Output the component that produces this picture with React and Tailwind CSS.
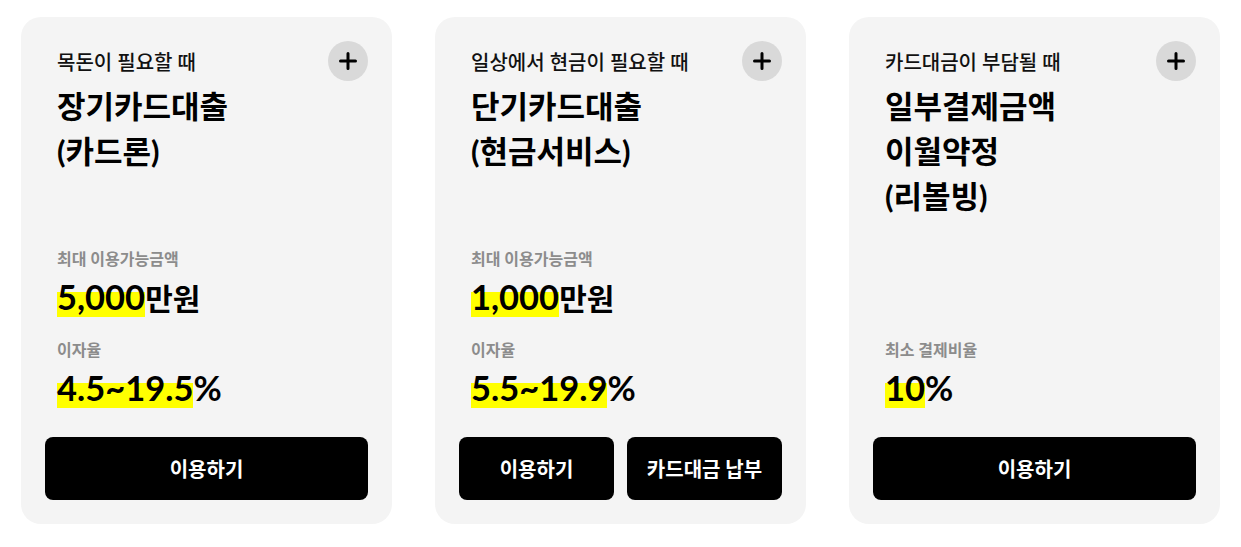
const FONT = "font-['Lato','Noto_Sans_CJK_KR',sans-serif]";

const cards = [
  {
    sub: '목돈이 필요할 때',
    title: ['장기카드대출', '(카드론)'],
    info: [
      { label: '최대 이용가능금액', value: '5,000', unit: '만원' },
      { label: '이자율', value: '4.5~19.5', unit: '%' },
    ],
    buttons: ['이용하기'],
  },
  {
    sub: '일상에서 현금이 필요할 때',
    title: ['단기카드대출', '(현금서비스)'],
    info: [
      { label: '최대 이용가능금액', value: '1,000', unit: '만원' },
      { label: '이자율', value: '5.5~19.9', unit: '%' },
    ],
    buttons: ['이용하기', '카드대금 납부'],
  },
  {
    sub: '카드대금이 부담될 때',
    title: ['일부결제금액', '이월약정', '(리볼빙)'],
    info: [{ label: '최소 결제비율', value: '10', unit: '%' }],
    buttons: ['이용하기'],
  },
];

function PlusButton() {
  return (
    <button className="w-10 h-10 shrink-0 rounded-full bg-[#d9d9d9] flex items-center justify-center">
      <svg width="18" height="18" viewBox="0 0 18 18" fill="none">
        <path d="M9 1.5v15M1.5 9h15" stroke="#000" strokeWidth="3" strokeLinecap="round" />
      </svg>
    </button>
  );
}

function InfoRow({ label, value, unit }) {
  return (
    <div className="mt-[23px] first:mt-0">
      <div className="text-[16px] leading-[20px] font-bold text-[#8c8c8c]">{label}</div>
      <div className="mt-[8px] h-[40px] leading-[40px] font-bold text-black whitespace-nowrap">
        <span className="text-[34.5px] bg-[linear-gradient(transparent_38%,#ffff00_38%)]">{value}</span>
        <span className={unit === '%' ? 'text-[34.5px]' : 'text-[30px]'}>{unit}</span>
      </div>
    </div>
  );
}

function Card({ card }) {
  return (
    <div className="flex-1 h-[507px] rounded-[20px] bg-[#f4f4f4] flex flex-col p-6">
      <div className="flex items-start justify-between">
        <div className="pl-3 pt-[8px]">
          <div className="text-[20px] leading-[26px] font-medium text-[#111]">{card.sub}</div>
          <div className="mt-[9px] text-[31px] leading-[45px] font-bold text-black">
            {card.title.map((t) => (
              <div key={t}>{t}</div>
            ))}
          </div>
        </div>
        <PlusButton />
      </div>
      <div className="mt-auto pl-3">
        {card.info.map((i) => (
          <InfoRow key={i.label} {...i} />
        ))}
      </div>
      <div className="mt-[29px] flex gap-[13px]">
        {card.buttons.map((b) => (
          <button
            key={b}
            className="flex-1 h-[63px] rounded-[8px] bg-black text-white text-[20px] font-bold"
          >
            {b}
          </button>
        ))}
      </div>
    </div>
  );
}

export default function App() {
  return (
    <div className={`${FONT} bg-white w-[1241px] h-[547px] pt-[17px] px-[21px] flex gap-[43px]`}>
      {cards.map((c) => (
        <Card key={c.sub} card={c} />
      ))}
    </div>
  );
}
